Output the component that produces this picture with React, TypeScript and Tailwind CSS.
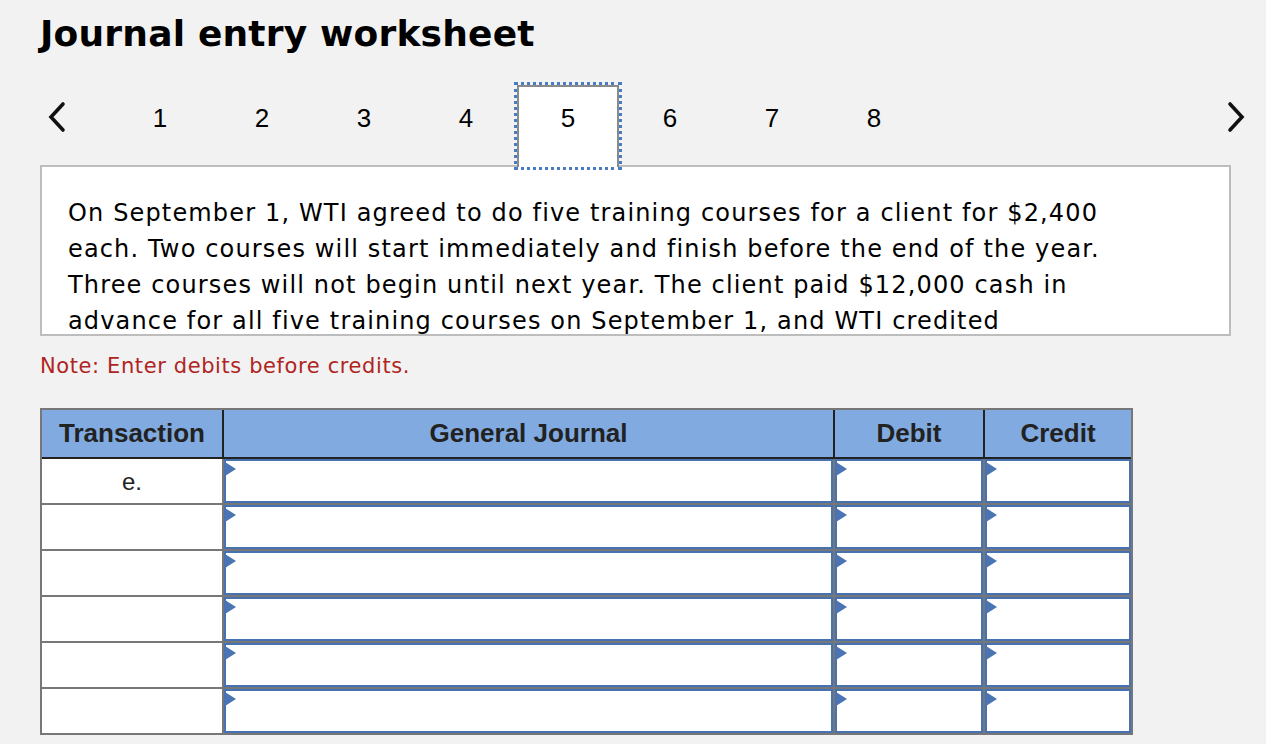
import React from "react";

const Chevron = ({ dir }: { dir: "left" | "right" }) => (
  <svg width="22" height="32" viewBox="0 0 22 32" fill="none">
    {dir === "left" ? (
      <polyline points="17,3 5,16 17,29" stroke="#111" strokeWidth="3.6" strokeLinecap="round" strokeLinejoin="miter" />
    ) : (
      <polyline points="5,3 17,16 5,29" stroke="#111" strokeWidth="3.6" strokeLinecap="round" strokeLinejoin="miter" />
    )}
  </svg>
);

const Marker = () => (
  <svg className="absolute left-[-1px] top-[1px]" width="11" height="14" viewBox="0 0 11 14">
    <polygon points="0,0 11,7 0,14" fill="#4a74b4" />
  </svg>
);

const InputCell = () => (
  <div className="relative h-full w-full border-2 border-[#4672b2] bg-white">
    <Marker />
  </div>
);

export default function App() {
  const tabs = [1, 2, 3, 4, 5, 6, 7, 8];
  const rows = ["e.", "", "", "", "", ""];
  return (
    <div className="min-h-screen w-full bg-[#f2f2f2] pl-[40px] pt-[12px]" style={{ fontFamily: '"DejaVu Sans", Verdana, sans-serif' }}>
      <h1 className="text-[36px] font-bold leading-[44px] tracking-[0.2px] text-black">Journal entry worksheet</h1>

      <div className="mt-[29px] flex w-[1213px] items-start">
        <button className="mt-[15px] flex h-[34px] w-[34px] items-center justify-center">
          <Chevron dir="left" />
        </button>
        <div className="ml-[35px] flex" style={{ fontFamily: '"Liberation Sans", Arial, sans-serif' }}>
          {tabs.map((t) =>
            t === 5 ? (
              <div
                key={t}
                className="relative z-10 h-[82px] w-[102px] border-2 border-b-0 border-[#8a8a8a] bg-white text-center outline-[3px] outline-dotted outline-[#4a7cc4] outline-offset-[0px]"
              >
                <div className="pt-[16px] text-[26px] leading-[30px] text-black">{t}</div>
              </div>
            ) : (
              <div key={t} className="h-[82px] w-[102px] text-center">
                <div className="pt-[18px] text-[26px] leading-[30px] text-black">{t}</div>
              </div>
            )
          )}
        </div>
        <div className="flex-1" />
        <button className="mt-[15px] flex h-[34px] w-[34px] items-center justify-center">
          <Chevron dir="right" />
        </button>
      </div>

      <div className="-mt-[2px] h-[171px] w-[1191px] overflow-hidden border-2 border-[#bdbdbd] bg-white pl-[26px] pt-[28px]">
        <div className="text-[24px] leading-[36px] tracking-[1.15px] text-black">
          <div className="whitespace-nowrap">On September 1, WTI agreed to do five training courses for a client for $2,400</div>
          <div className="whitespace-nowrap">each. Two courses will start immediately and finish before the end of the year.</div>
          <div className="whitespace-nowrap">Three courses will not begin until next year. The client paid $12,000 cash in</div>
          <div className="whitespace-nowrap">advance for all five training courses on September 1, and WTI credited</div>
        </div>
      </div>

      <p className="mt-[16px] text-[21px] leading-[28px] tracking-[0.6px] text-[#b0241f]">Note: Enter debits before credits.</p>

      <div
        className="mt-[28px] w-[1093px] border-2 border-[#777777] bg-white"
        style={{ fontFamily: '"Liberation Sans", Arial, sans-serif' }}
      >
        <div className="grid h-[49px] grid-cols-[180px_611px_150px_148px] border-b-2 border-[#222222] bg-[#80aae0] text-[26px] font-bold text-[#222222]">
          <div className="flex items-center justify-center">Transaction</div>
          <div className="flex items-center justify-center border-l-2 border-[#222222]">General Journal</div>
          <div className="flex items-center justify-center border-l-2 border-[#222222]">Debit</div>
          <div className="flex items-center justify-center border-l-2 border-[#222222]">Credit</div>
        </div>
        {rows.map((r, i) => (
          <div
            key={i}
            className={`grid h-[44px] grid-cols-[180px_611px_150px_148px] ${i > 0 ? "box-content border-t-2 border-[#777777]" : ""}`}
          >
            <div className="flex items-center justify-center pt-[2px] text-[24px] text-[#222222]">{r}</div>
            <div className="border-l-2 border-[#777777]">
              <InputCell />
            </div>
            <div className="border-l-2 border-[#777777]">
              <InputCell />
            </div>
            <div className="border-l-2 border-[#777777]">
              <InputCell />
            </div>
          </div>
        ))}
      </div>
    </div>
  );
}
